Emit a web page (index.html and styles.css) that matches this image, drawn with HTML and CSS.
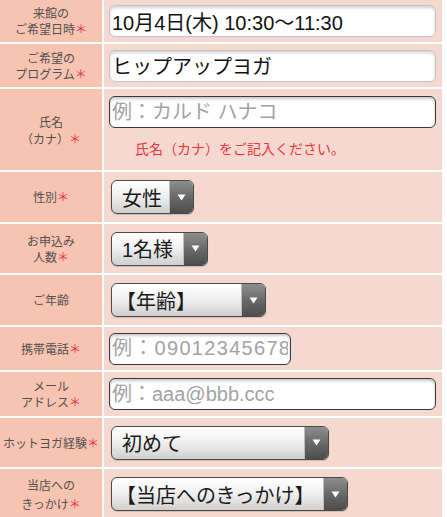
FILE: index.html
```html
<!DOCTYPE html>
<html lang="ja">
<head>
<meta charset="utf-8">
<title>予約フォーム</title>
<link rel="stylesheet" href="styles.css">
</head>
<body>
<form class="form">
  <div class="label r1"><span class="txt">来館の<br>ご希望日時<span class="req">＊</span></span></div>
  <div class="value r1"><input class="field full ro" type="text" value="10月4日(木) 10:30〜11:30" readonly></div>

  <div class="label r2"><span class="txt">ご希望の<br>プログラム<span class="req">＊</span></span></div>
  <div class="value r2"><input class="field full ro" type="text" value="ヒップアップヨガ" readonly></div>

  <div class="label r3 tall"><span class="txt">氏名<br>（カナ）<span class="req">＊</span></span></div>
  <div class="value r3 stack">
    <input class="field full" type="text" placeholder="例：カルド ハナコ">
    <p class="error">氏名（カナ）をご記入ください。</p>
  </div>

  <div class="label r4"><span class="txt">性別<span class="req">＊</span></span></div>
  <div class="value r4">
    <div class="select s-gender"><span class="val">女性</span><span class="arrow"><svg width="9" height="7" viewBox="0 0 9 7"><path d="M0.5 0.5H8.5L4.5 6.5Z" fill="#fff"/></svg></span></div>
  </div>

  <div class="label r5"><span class="txt">お申込み<br>人数<span class="req">＊</span></span></div>
  <div class="value r5">
    <div class="select s-count"><span class="val">1名様</span><span class="arrow"><svg width="9" height="7" viewBox="0 0 9 7"><path d="M0.5 0.5H8.5L4.5 6.5Z" fill="#fff"/></svg></span></div>
  </div>

  <div class="label r6"><span class="txt">ご年齢</span></div>
  <div class="value r6">
    <div class="select s-age"><span class="val bracket">【年齢】</span><span class="arrow"><svg width="9" height="7" viewBox="0 0 9 7"><path d="M0.5 0.5H8.5L4.5 6.5Z" fill="#fff"/></svg></span></div>
  </div>

  <div class="label r7"><span class="txt">携帯電話<span class="req">＊</span></span></div>
  <div class="value r7"><input class="field tel" type="tel" placeholder="例：09012345678"></div>

  <div class="label r8"><span class="txt">メール<br>アドレス<span class="req">＊</span></span></div>
  <div class="value r8"><input class="field full" type="email" placeholder="例：aaa@bbb.ccc"></div>

  <div class="label r9"><span class="txt">ホットヨガ経験<span class="req">＊</span></span></div>
  <div class="value r9">
    <div class="select s-exp"><span class="val">初めて</span><span class="arrow"><svg width="9" height="7" viewBox="0 0 9 7"><path d="M0.5 0.5H8.5L4.5 6.5Z" fill="#fff"/></svg></span></div>
  </div>

  <div class="label r10 loose"><span class="txt">当店への<br>きっかけ<span class="req">＊</span></span></div>
  <div class="value r10">
    <div class="select s-source"><span class="val bracket">【当店へのきっかけ】</span><span class="arrow"><svg width="9" height="7" viewBox="0 0 9 7"><path d="M0.5 0.5H8.5L4.5 6.5Z" fill="#fff"/></svg></span></div>
  </div>
</form>
</body>
</html>
```

FILE: styles.css
```css
* { box-sizing: border-box; }

html, body {
  margin: 0;
  padding: 0;
  background: #ffffff;
}

body {
  font-family: "Liberation Sans", "Noto Sans CJK JP", sans-serif;
  overflow: hidden;
}

.form {
  display: grid;
  grid-template-columns: 102px 1fr;
  column-gap: 2px;
  row-gap: 2px;
  width: 442px;
  margin: 0;
}

.label {
  display: flex;
  align-items: center;
  justify-content: center;
  text-align: center;
  background: #f6c4b1;
  color: #555050;
  font-family: "Noto Sans CJK JP", sans-serif;
  font-size: 12px;
  line-height: 16px;
}

.label .txt { display: block; }

.label.tall { line-height: 17px; }
.label.loose { line-height: 19px; }

.req {
  color: #e8304a;
  font-size: 12px;
}

.value {
  display: flex;
  align-items: center;
  background: #f5d9d0;
  padding: 0 6px 0 5px;
}

.value.stack {
  flex-direction: column;
  align-items: flex-start;
  justify-content: flex-start;
  padding-top: 7px;
}

.r1 { min-height: 42px; }
.r2 { min-height: 43px; }
.r3 { min-height: 81px; }
.r4 { min-height: 50px; }
.r5 { min-height: 49px; }
.r6 { min-height: 50px; }
.r7 { min-height: 43px; }
.r8 { min-height: 44px; }
.r9 { min-height: 49px; }
.r10 { min-height: 50px; }

.field {
  height: 32px;
  margin: 0;
  padding: 0 2px;
  border: 1px solid #3a3a3a;
  border-radius: 6px;
  background: #ffffff;
  box-shadow: inset 0 2px 3px rgba(0, 0, 0, 0.22);
  font-family: "Liberation Sans", "Noto Sans CJK JP", sans-serif;
  font-size: 20px;
  color: #111111;
  outline: none;
}

.field::placeholder {
  color: #a3a3a3;
  opacity: 1;
}

.field.ro {
  border-color: #c4c4c4;
  box-shadow: inset 0 2px 3px rgba(0, 0, 0, 0.18);
}

.full { width: 327px; }

.tel {
  width: 182px;
  letter-spacing: 1.3px;
}

.error {
  margin: 10px 0 0 26px;
  color: #e8363c;
  font-family: "Noto Sans CJK JP", sans-serif;
  font-size: 14px;
  line-height: 20px;
}

.select {
  display: flex;
  align-items: stretch;
  height: 34px;
  margin-left: 2px;
  border: 1px solid #4a4a4a;
  border-radius: 6px;
  overflow: hidden;
  background: linear-gradient(#ffffff 0%, #f1f1f1 45%, #cfcfcf 100%);
  box-shadow: 0 1px 1px rgba(0, 0, 0, 0.15);
}

.select .val {
  flex: 1;
  display: flex;
  align-items: center;
  padding-left: 10px;
  font-family: "Liberation Sans", "Noto Sans CJK JP", sans-serif;
  font-size: 20px;
  color: #1a1a1a;
  white-space: nowrap;
}

.select .val.bracket { padding-left: 4px; }

.select .arrow {
  width: 24px;
  flex: none;
  display: flex;
  align-items: center;
  justify-content: center;
  border-left: 1px solid #bdbdbd;
  background: linear-gradient(#8e8e8e 0%, #6a6a6a 50%, #4c4c4c 100%);
}

.s-gender { width: 83px; }
.s-count { width: 97px; }
.s-age { width: 155px; }
.s-exp { width: 218px; }
.s-source { width: 237px; }
```
